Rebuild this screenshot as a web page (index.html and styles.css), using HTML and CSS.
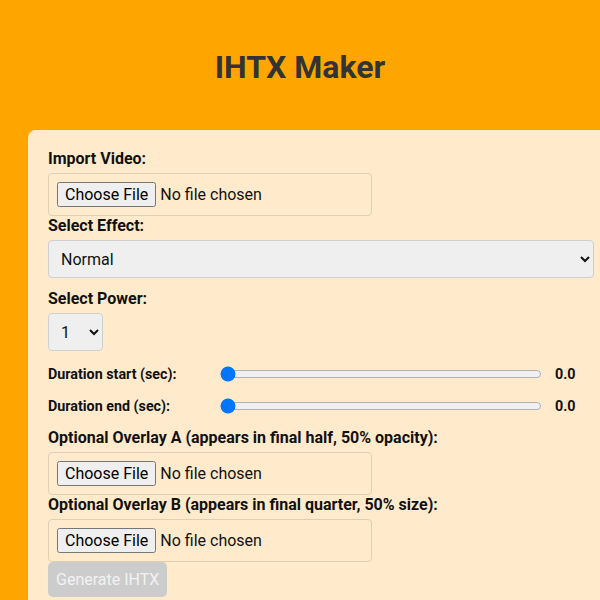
FILE: index.html
```html
<!DOCTYPE html>
<html lang="en">
<head>
  <meta charset="UTF-8">
  <meta name="viewport" content="width=device-width, initial-scale=1.0">
  <title>IHTX Maker</title>
  <link rel="stylesheet" href="styles.css">
</head>
<body>
  <h1>IHTX Maker</h1>
  <div class="container">
    <label for="videoInput">Import Video:</label>
    <input type="file" id="videoInput" accept="video/*">

    <label for="effectSelect">Select Effect:</label>
    <select id="effectSelect" class="effect">
      <option value="normal">Normal</option>
      <option value="zoom">Zoom</option>
      <option value="shake">Shake</option>
    </select>

    <label for="powerSelect">Select Power:</label>
    <select id="powerSelect" class="power">
      <option>1</option>
      <option>2</option>
      <option>3</option>
    </select>

    <div class="slider-row first">
      <span class="slider-label">Duration start (sec):</span>
      <input type="range" id="startRange" min="0" max="10" step="0.1" value="0">
      <span class="slider-value" id="startValue">0.0</span>
    </div>
    <div class="slider-row">
      <span class="slider-label">Duration end (sec):</span>
      <input type="range" id="endRange" min="0" max="10" step="0.1" value="0">
      <span class="slider-value" id="endValue">0.0</span>
    </div>

    <label for="overlayA" class="overlay-label">Optional Overlay A (appears in final half, 50% opacity):</label>
    <input type="file" id="overlayA" accept="image/*">

    <label for="overlayB">Optional Overlay B (appears in final quarter, 50% size):</label>
    <input type="file" id="overlayB" accept="image/*">

    <button id="generateBtn" disabled>Generate IHTX</button>
  </div>
</body>
</html>
```

FILE: styles.css
```css
html, body {
  overflow: hidden;
}
body {
  margin: 0;
  font-family: Roboto, Arial, sans-serif;
  background-color: #ffa500;
  color: #111;
}
h1 {
  margin: 0;
  padding: 45px 0 41px;
  text-align: center;
  font-size: 32px;
  line-height: 44px;
  color: #333;
}
.container {
  width: 546px;
  margin-left: 28px;
  padding: 19px 20px 16px;
  background-color: #ffebcb;
  border-radius: 8px;
}
label {
  display: block;
  font-size: 16px;
  font-weight: bold;
  line-height: 20px;
  margin-bottom: 4px;
}
input[type="file"] {
  display: block;
  font-family: Roboto, Arial, sans-serif;
  font-size: 16px;
  padding: 8px;
  border: 1px solid #e0cfb2;
  border-radius: 4px;
}
input[type="file"]::file-selector-button {
  font-family: Roboto, Arial, sans-serif;
  font-size: 16px;
}
select {
  display: block;
  font-family: Roboto, Arial, sans-serif;
  font-size: 16px;
  height: 38px;
  padding: 0 8px;
  background-color: #efefef;
  border: 1px solid #cfcfcf;
  border-radius: 4px;
  color: #111;
  margin-bottom: 11px;
}
.effect {
  width: 546px;
}
.power {
  width: 55px;
  margin-bottom: 0;
}
.slider-row {
  display: flex;
  align-items: center;
  height: 20px;
  margin-top: 12px;
}
.slider-row.first {
  margin-top: 13px;
}
.slider-label {
  width: 172px;
  font-size: 14.3px;
  font-weight: bold;
}
.slider-row input[type="range"] {
  flex: 1;
  margin: 0;
}
.slider-value {
  width: 39px;
  margin-left: 13px;
  font-size: 14.3px;
  font-weight: bold;
}
.overlay-label {
  margin-top: 12px;
}
button {
  display: block;
  font-family: Roboto, Arial, sans-serif;
  font-size: 16px;
  padding: 8px;
  border: none;
  border-radius: 5px;
  background-color: #ccc;
  color: #f2f2f2;
}
```
